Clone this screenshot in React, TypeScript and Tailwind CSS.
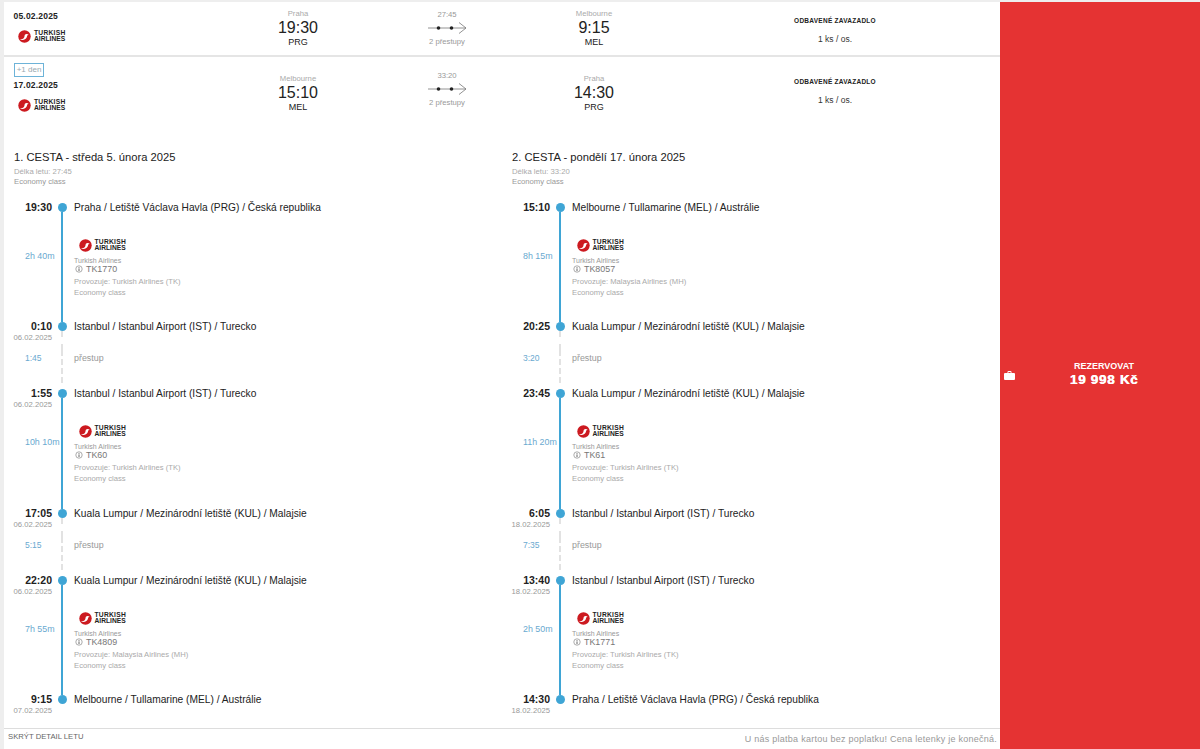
import React from "react";

function Logo() {
  return (
    <div className="flex items-center h-[12px]">
      <svg width="13" height="13" viewBox="0 0 13 13" className="shrink-0">
        <circle cx="6.5" cy="6.5" r="6.2" fill="#cc1a20" />
        <path d="M2 9.6C5 9.6 6.5 8 6.6 5.8 6.7 4 8.4 3.3 10.9 4.6 9.6 4.7 9.3 5.6 9 6.6 8.5 9.3 5 11 2 9.6z" fill="#fff" />
      </svg>
      <div className="ml-[3px] font-bold text-[#222] text-[6.7px] leading-[6.5px] whitespace-nowrap">
        <div className="tracking-[0.25px]">TURKISH</div>
        <div>AIRLINES</div>
      </div>
    </div>
  );
}

function Arrow() {
  return (
    <svg width="39" height="12" viewBox="0 0 39 12" className="block">
      <path d="M0 6H38M31 0.5L38 6L31 11.5" fill="none" stroke="#777" strokeWidth="0.8" />
      <circle cx="10.5" cy="6" r="1.8" fill="#222" />
      <circle cx="23.5" cy="6" r="1.8" fill="#222" />
    </svg>
  );
}

function Place({ city, time, code }: { city: string; time: string; code: string }) {
  return (
    <div className="flex flex-col items-center">
      <div className="text-[7.7px] leading-[10px] text-[#aaa]">{city}</div>
      <div className="text-[16px] leading-[17px] text-[#222]">{time}</div>
      <div className="mt-[1px] text-[9px] leading-[11px] text-[#222]">{code}</div>
    </div>
  );
}

function Summary({ extra, date, city1, time1, code1, dur, city2, time2, code2, h, logoTop, placeTop, arrowTop, bagTop }: {
  extra?: boolean; date: string; city1: string; time1: string; code1: string; dur: string; city2: string; time2: string; code2: string;
  h: string; logoTop: string; placeTop: string; arrowTop: string; bagTop: string;
}) {
  return (
    <div className={`flex items-start bg-white ${h}`}>
      <div className={`w-[234px] pl-[9.5px] ${logoTop}`}>
        {extra && (
          <div className="ml-[0.5px] w-[30px] h-[14px] mb-[2px] border border-[#6db3d8] text-[8px] leading-[12px] text-center text-[#99a9b0]">+1 den</div>
        )}
        <div className="text-[8.5px] leading-[12px] font-bold text-[#222] tracking-[0.2px]">{date}</div>
        <div className="mt-[8px] ml-[4.5px]"><Logo /></div>
      </div>
      <div className={`w-[120px] ${placeTop}`}><Place city={city1} time={time1} code={code1} /></div>
      <div className={`w-[178px] flex flex-col items-center ${arrowTop}`}>
        <div className="text-[7.7px] leading-[10px] text-[#999]">{dur}</div>
        <div className="mt-[2px] mb-[3.5px]"><Arrow /></div>
        <div className="text-[7.7px] leading-[10px] text-[#999]">2 přestupy</div>
      </div>
      <div className={`w-[116px] ${placeTop}`}><Place city={city2} time={time2} code={code2} /></div>
      <div className={`w-[330px] ml-[18px] flex flex-col items-center ${bagTop}`}>
        <div className="text-[6.5px] leading-[8px] font-bold text-[#222] tracking-[0.25px]">ODBAVENÉ ZAVAZADLO</div>
        <div className="mt-[9px] text-[8.5px] leading-[10px] text-[#333]">1 ks / os.</div>
      </div>
    </div>
  );
}

type Seg = {
  from: { time: string; date?: string; place: string };
  dur: string; flight: string; operator: string; h: string;
  to: { time: string; date?: string; place: string };
  layover?: string;
};

function Stop({ time, date, place, top, bottom }: { time: string; date?: string; place: string; top: boolean; bottom: "solid" | "dashed" | "none" }) {
  return (
    <div className="flex h-[34px]">
      <div className="w-[38px] text-right">
        <div className="text-[10.5px] leading-[20px] font-bold text-[#222]">{time}</div>
        {date && <div className="-mt-[3px] text-[7.7px] leading-[10px] text-[#999] whitespace-nowrap -ml-[4px]">{date}</div>}
      </div>
      <div className="w-[20px] flex flex-col items-center">
        <div className={`h-[6px] w-[2px] ${top ? "bg-[#3fa5d5]" : ""}`} />
        <div className="w-[9px] h-[9px] rounded-full bg-[#3fa5d5] shrink-0" />
        {bottom === "solid" && <div className="flex-1 w-[2px] bg-[#3fa5d5]" />}
        {bottom === "dashed" && <div className="flex-1 border-l-2 border-dashed border-[#e2e2e2]" />}
      </div>
      <div className="pl-[2px] pt-[1px] text-[10.2px] leading-[20px] text-[#222] whitespace-nowrap">{place}</div>
    </div>
  );
}

function InfoIcon() {
  return (
    <svg width="8" height="8" viewBox="0 0 8 8" className="shrink-0">
      <circle cx="4" cy="4" r="3.2" fill="none" stroke="#888" strokeWidth="0.7" />
      <path d="M4 3.4V6M4 2V2.8" stroke="#666" strokeWidth="1" />
    </svg>
  );
}

function Column({ title, length, segs }: { title: string; length: string; segs: Seg[] }) {
  return (
    <div className="w-[498.5px] pl-[10px] pt-[22px]">
      <div className="text-[11.2px] leading-[14px] text-[#222]">{title}</div>
      <div className="mt-[3px] text-[7.7px] leading-[10px] text-[#aaa]">Délka letu: {length}</div>
      <div className="text-[7.7px] leading-[10px] text-[#999]">Economy class</div>
      <div className="mt-[10px]">
        {segs.map((s, i) => (
          <div key={i}>
            <Stop {...s.from} top={false} bottom="solid" />
            <div className={`flex ${s.h}`}>
              <div className="w-[38px] pl-[11px] pt-[18px] text-[8.9px] leading-[14px] text-[#6aa9d0] whitespace-nowrap">{s.dur}</div>
              <div className="w-[20px] flex justify-center"><div className="w-[2px] bg-[#3fa5d5]" /></div>
              <div className="pl-[2px] pt-[8px]">
                <div className="ml-[4.5px]"><Logo /></div>
                <div className="mt-[6px] text-[7px] leading-[8px] text-[#999]">Turkish Airlines</div>
                <div className="-mt-[1px] flex items-center gap-[3px] pl-[1px] text-[8.9px] leading-[10px] text-[#777]"><InfoIcon />{s.flight}</div>
                <div className="mt-[4px] text-[7.65px] leading-[8px] text-[#aaa]">Provozuje: {s.operator}</div>
                <div className="mt-[3px] text-[7.7px] leading-[8px] text-[#aaa]">Economy class</div>
              </div>
            </div>
            <Stop {...s.to} top bottom={s.layover ? "dashed" : "none"} />
            {s.layover && (
              <div className="flex h-[33px]">
                <div className="w-[38px] pl-[11px] text-[8.5px] leading-[16px] text-[#6aa9d0]">{s.layover}</div>
                <div className="w-[20px] flex justify-center"><div className="border-l-2 border-dashed border-[#e2e2e2]" /></div>
                <div className="pl-[2px] text-[8.9px] leading-[16px] text-[#999]">přestup</div>
              </div>
            )}
          </div>
        ))}
      </div>
    </div>
  );
}

const PRG = "Praha / Letiště Václava Havla (PRG) / Česká republika";
const IST = "Istanbul / Istanbul Airport (IST) / Turecko";
const KUL = "Kuala Lumpur / Mezinárodní letiště (KUL) / Malajsie";
const MEL = "Melbourne / Tullamarine (MEL) / Austrálie";

const outbound: Seg[] = [
  { from: { time: "19:30", place: PRG }, dur: "2h 40m", flight: "TK1770", operator: "Turkish Airlines (TK)", h: "h-[85px]", to: { time: "0:10", date: "06.02.2025", place: IST }, layover: "1:45" },
  { from: { time: "1:55", date: "06.02.2025", place: IST }, dur: "10h 10m", flight: "TK60", operator: "Turkish Airlines (TK)", h: "h-[86px]", to: { time: "17:05", date: "06.02.2025", place: KUL }, layover: "5:15" },
  { from: { time: "22:20", date: "06.02.2025", place: KUL }, dur: "7h 55m", flight: "TK4809", operator: "Malaysia Airlines (MH)", h: "h-[85px]", to: { time: "9:15", date: "07.02.2025", place: MEL } },
];
const inbound: Seg[] = [
  { from: { time: "15:10", place: MEL }, dur: "8h 15m", flight: "TK8057", operator: "Malaysia Airlines (MH)", h: "h-[85px]", to: { time: "20:25", place: KUL }, layover: "3:20" },
  { from: { time: "23:45", place: KUL }, dur: "11h 20m", flight: "TK61", operator: "Turkish Airlines (TK)", h: "h-[86px]", to: { time: "6:05", date: "18.02.2025", place: IST }, layover: "7:35" },
  { from: { time: "13:40", date: "18.02.2025", place: IST }, dur: "2h 50m", flight: "TK1771", operator: "Turkish Airlines (TK)", h: "h-[85px]", to: { time: "14:30", date: "18.02.2025", place: PRG } },
];

export default function App() {
  return (
    <div className="h-[749px] overflow-hidden bg-[#eeeeee] pt-[2px] pl-[4px] flex [font-family:'Liberation_Sans',Arial,sans-serif]">
      <div className="w-[996px] bg-white flex flex-col">
        <Summary date="05.02.2025" city1="Praha" time1="19:30" code1="PRG" dur="27:45" city2="Melbourne" time2="9:15" code2="MEL"
          h="h-[53px]" logoTop="pt-[8px]" placeTop="pt-[6.5px]" arrowTop="pt-[7.5px]" bagTop="pt-[15px]" />
        <div className="h-[2px] bg-[#e5e5e5]" />
        <Summary extra date="17.02.2025" city1="Melbourne" time1="15:10" code1="MEL" dur="33:20" city2="Praha" time2="14:30" code2="PRG"
          h="h-[71px]" logoTop="pt-[6px]" placeTop="pt-[17px]" arrowTop="pt-[13.5px]" bagTop="pt-[21px]" />
        <div className="flex flex-1">
          <Column title="1. CESTA - středa 5. února 2025" length="27:45" segs={outbound} />
          <Column title="2. CESTA - pondělí 17. února 2025" length="33:20" segs={inbound} />
        </div>
        <div className="h-[21px] border-t border-[#dddddd] flex justify-between">
          <div className="pl-[4px] pt-[3px] text-[7.7px] leading-[10px] text-[#666]">SKRÝT DETAIL LETU</div>
          <div className="pr-[3px] pt-[5px] text-[9px] leading-[10px] text-[#999] tracking-[0.25px]">U nás platba kartou bez poplatku! Cena letenky je konečná.</div>
        </div>
      </div>
      <div className="w-[200px] bg-[#e53333] flex items-center pl-[4px] pr-[7px] text-white">
        <svg width="11" height="9" viewBox="0 0 11 9" className="shrink-0 mt-[-1px]">
          <path d="M3.5 2V1a1 1 0 0 1 1-1h2a1 1 0 0 1 1 1v1H10a1 1 0 0 1 1 1v5a1 1 0 0 1-1 1H1a1 1 0 0 1-1-1V3a1 1 0 0 1 1-1zM4.4 1v1h2.2V1z" fill="#fff" />
        </svg>
        <div className="flex-1 text-center mb-[4px]">
          <div className="text-[9px] leading-[12px] font-bold">REZERVOVAT</div>
          <div className="text-[13.5px] leading-[15px] font-bold tracking-[0.7px] [text-shadow:0.5px_0_0_#fff]">19 998 Kč</div>
        </div>
      </div>
    </div>
  );
}
